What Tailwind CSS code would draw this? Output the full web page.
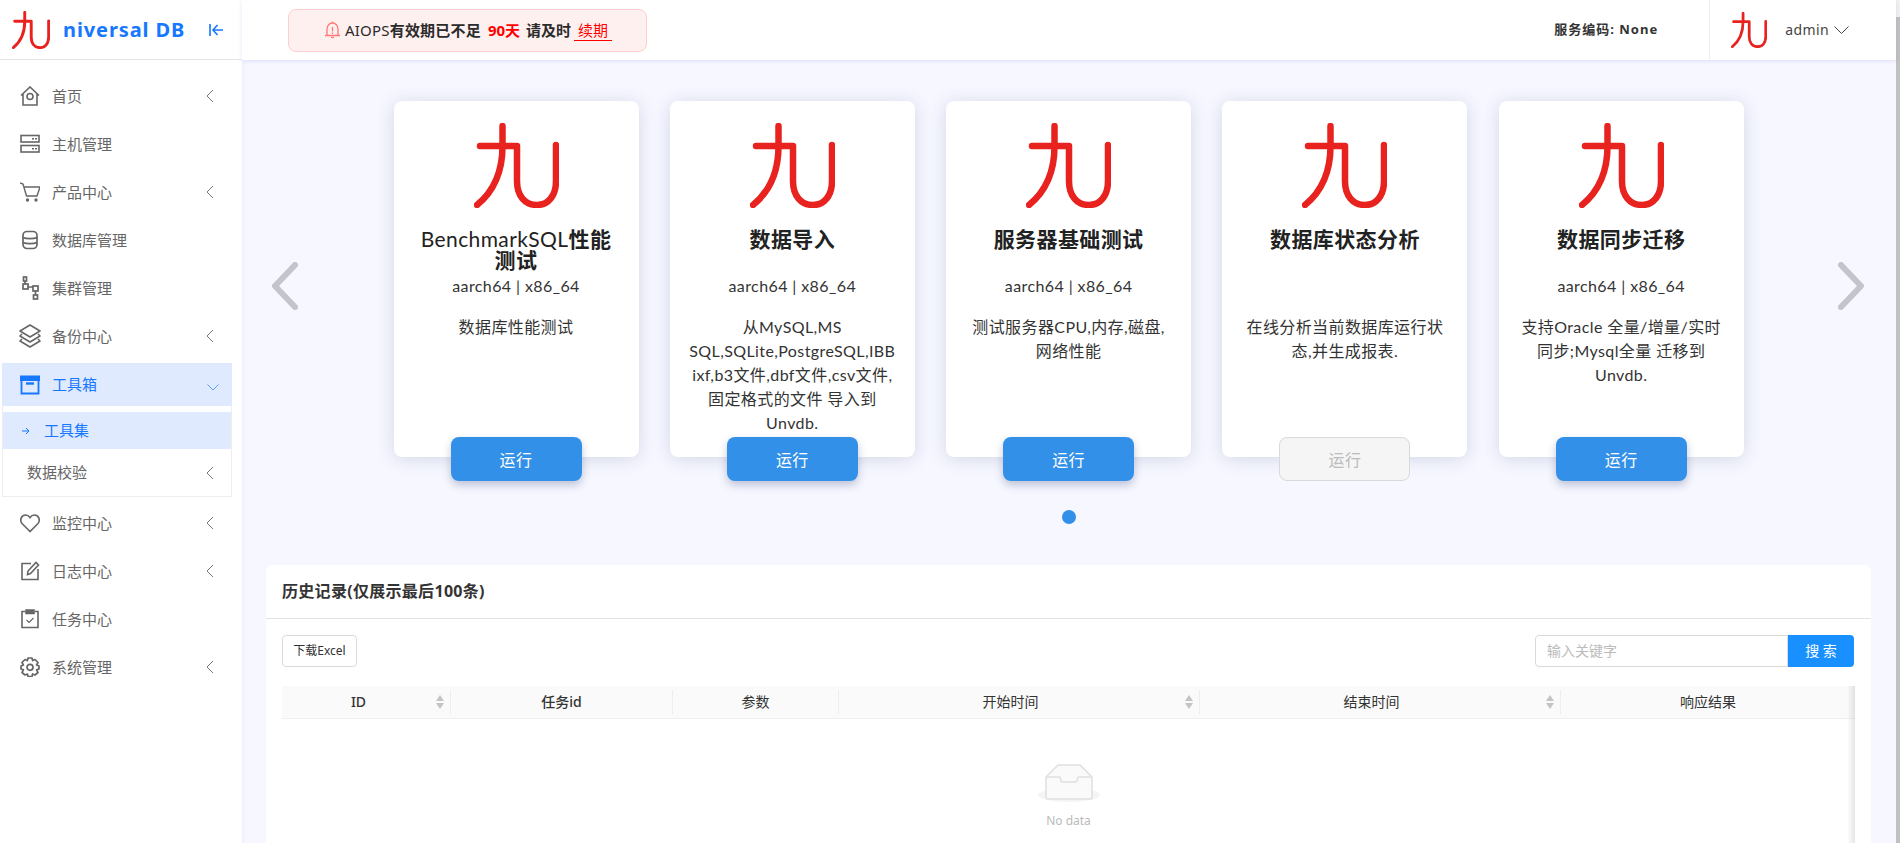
<!DOCTYPE html>
<html lang="zh">
<head>
<meta charset="UTF-8">
<title>Universal DB</title>
<script src="https://cdn.jsdelivr.net/npm/@tailwindcss/browser@4"></script>
</head>
<body class="h-screen overflow-hidden bg-white text-[#333] font-['Noto_Sans','Noto_Sans_CJK_SC',sans-serif]">
<svg class="hidden">
  <symbol id="logo" viewBox="0 0 85 85" fill="none">
    <path d="M28.5 3V23C28.5 50 19 69 3 82M6 23H43V58C43 73 51 82 63 82C74 82 82 73 82 58V22" stroke="#e8231f" stroke-width="6.5" stroke-linecap="round" stroke-linejoin="round"/>
  </symbol>
  <symbol id="chev-left" viewBox="0 0 8 14" fill="none">
    <path d="M7 1L1 7L7 13" stroke="#777" stroke-width="1"/>
  </symbol>
</svg>
<div class="flex h-screen">
  <!-- Sidebar -->
  <aside class="w-[242px] shrink-0 bg-white text-[15px] text-[#666] z-10 shadow-[1px_0_4px_rgba(90,90,200,0.06)]">
    <div class="h-[60px] flex items-center border-b border-[#e5e5e5] pl-3">
      <svg class="w-[38px] h-[38px]"><use href="#logo"/></svg>
      <span class="ml-[13px] text-[20px] font-bold tracking-[0.9px] text-[#1677ff]">niversal DB</span>
      <svg class="ml-auto mr-[19px] w-[14px] h-[14px]" viewBox="0 0 14 14" fill="none" stroke="#1677ff" stroke-width="1.6"><path d="M1 1V13M14 7H4M8.5 2L4 7L8.5 12"/></svg>
    </div>
    <nav class="pt-3">
      <a class="h-12 flex items-center pl-5 pr-7">
        <svg class="w-5 h-5" viewBox="0 0 20 20" fill="none" stroke="#666" stroke-width="1.6"><path d="M1 9.5L10 1L19 9.5M3 8V19H17V8"/><circle cx="10" cy="10.5" r="3"/></svg>
        <span class="ml-3">首页</span>
        <svg class="ml-auto w-2 h-[14px]"><use href="#chev-left"/></svg>
      </a>
      <a class="h-12 flex items-center pl-5 pr-7">
        <svg class="w-5 h-5" viewBox="0 0 20 20" fill="none" stroke="#666" stroke-width="1.6"><rect x="1" y="1.5" width="18" height="6.5"/><rect x="1" y="11.5" width="18" height="6.5"/><path d="M12 4.7H17M12 14.7H17" stroke-dasharray="2 1"/></svg>
        <span class="ml-3">主机管理</span>
      </a>
      <a class="h-12 flex items-center pl-5 pr-7">
        <svg class="w-5 h-5" viewBox="0 0 20 20" fill="none" stroke="#666" stroke-width="1.4"><path d="M0 1L3 2L6.5 14H17L20 5H4"/><circle cx="7.5" cy="18" r="1" fill="#666"/><circle cx="16" cy="18" r="1" fill="#666"/></svg>
        <span class="ml-3">产品中心</span>
        <svg class="ml-auto w-2 h-[14px]"><use href="#chev-left"/></svg>
      </a>
      <a class="h-12 flex items-center pl-5 pr-7">
        <svg class="w-5 h-5" viewBox="0 0 20 20" fill="none" stroke="#666" stroke-width="1.7"><rect x="3" y="1.5" width="14" height="17" rx="4"/><path d="M3 7.5C6 9 14 9 17 7.5M3 12.5C6 14 14 14 17 12.5"/></svg>
        <span class="ml-3">数据库管理</span>
      </a>
      <a class="h-12 flex items-center pl-5 pr-7">
        <svg class="w-5 h-6" viewBox="0 0 20 24" fill="none" stroke="#666" stroke-width="1.7"><rect x="3.5" y="1" width="3" height="4"/><rect x="3" y="8" width="5" height="5"/><rect x="13" y="10" width="5" height="5"/><rect x="13.5" y="19" width="4" height="4"/><path d="M5 5V8M8 11H13M15.5 15V19"/></svg>
        <span class="ml-3">集群管理</span>
      </a>
      <a class="h-12 flex items-center pl-5 pr-7">
        <svg class="w-[22px] h-[24px] -ml-px -mr-px" viewBox="0 0 22 24" fill="none" stroke="#666" stroke-width="1.6" stroke-linejoin="round"><path d="M11 1L21 7L11 13L1 7Z"/><path d="M3 10L1 12L11 18L21 12L19 10"/><path d="M3 15L1 17L11 23L21 17L19 15"/></svg>
        <span class="ml-3">备份中心</span>
        <svg class="ml-auto w-2 h-[14px]"><use href="#chev-left"/></svg>
      </a>
      <div class="mt-[3px] mb-[2px] mx-[2px] w-[230px]">
        <a class="h-[43px] flex items-center pl-[18px] pr-[13px] bg-[#dfeaff] text-[#1677ff]">
          <svg class="w-5 h-5" viewBox="0 0 20 20" fill="none" stroke="#1677ff" stroke-width="1.8"><path d="M0 1.5H20V5H0Z" fill="#1677ff"/><path d="M1.5 5V18.5H18.5V5"/><path d="M6 8.5H14" stroke-width="2.4"/></svg>
          <span class="ml-3">工具箱</span>
          <svg class="ml-auto w-3 h-[7px] mt-[6px]" viewBox="0 0 12 7" fill="none" stroke="#5b9cf8" stroke-width="1"><path d="M0.5 0.5L6 6L11.5 0.5"/></svg>
        </a>
        <div class="h-[91px] border border-t-0 border-[#eee] pt-[6px]">
          <a class="h-[37px] flex items-center pl-[19px] bg-[#dfeaff] text-[#1677ff]">
            <svg class="w-2 h-2" viewBox="0 0 8 8" fill="none" stroke="#1677ff" stroke-width="1"><path d="M0 4H7M4 1L7 4L4 7"/></svg>
            <span class="ml-[14px]">工具集</span>
          </a>
          <a class="h-[47px] flex items-center pl-[24px] pr-[17px]">
            <span>数据校验</span>
            <svg class="ml-auto w-2 h-[14px]"><use href="#chev-left"/></svg>
          </a>
        </div>
      </div>
      <a class="h-12 flex items-center pl-5 pr-7">
        <svg class="w-5 h-5" viewBox="0 0 20 20" fill="none" stroke="#666" stroke-width="1.6"><path d="M10 18.5L2 10.5C-0.5 7.5 1 2 5.5 2C7.5 2 9 3 10 4.5C11 3 12.5 2 14.5 2C19 2 20.5 7.5 18 10.5Z"/></svg>
        <span class="ml-3">监控中心</span>
        <svg class="ml-auto w-2 h-[14px]"><use href="#chev-left"/></svg>
      </a>
      <a class="h-12 flex items-center pl-5 pr-7">
        <svg class="w-5 h-5" viewBox="0 0 20 20" fill="none" stroke="#666" stroke-width="1.6"><path d="M11 2.5H2V18.5H18V8"/><path d="M7.5 13.5L8 10L16 1.5L18.5 4L10.5 12.5Z"/></svg>
        <span class="ml-3">日志中心</span>
        <svg class="ml-auto w-2 h-[14px]"><use href="#chev-left"/></svg>
      </a>
      <a class="h-12 flex items-center pl-5 pr-7">
        <svg class="w-5 h-5" viewBox="0 0 20 20" fill="none" stroke="#666" stroke-width="1.6"><path d="M5 2.5H2V18.5H18V2.5H15"/><path d="M6 1H14V4.5H6Z" fill="#666"/><path d="M6.5 11L9 13.5L13.5 9" stroke-width="1.2"/></svg>
        <span class="ml-3">任务中心</span>
      </a>
      <a class="h-12 flex items-center pl-5 pr-7">
        <svg class="w-5 h-5" viewBox="0 0 20 20" fill="none" stroke="#666" stroke-width="1.7" stroke-linejoin="round"><path d="M8 1H12L12.6 3.6L15 2.5L18 5.5L16.6 8L19 9V12L16.6 12.8L18 15.5L15 18L12.6 17L12 19.5H8L7.4 17L5 18L2 15.5L3.4 12.8L1 12V9L3.4 8L2 5.5L5 2.5L7.4 3.6Z"/><circle cx="10" cy="10.3" r="3"/></svg>
        <span class="ml-3">系统管理</span>
        <svg class="ml-auto w-2 h-[14px]"><use href="#chev-left"/></svg>
      </a>
    </nav>
  </aside>

  <!-- Main -->
  <main class="flex-1 min-w-0 flex flex-col bg-[#f6f7ff]">
    <header class="h-[60px] shrink-0 bg-white flex items-center pl-[46px] shadow-[0_1px_4px_rgba(100,100,230,0.18)] z-10">
      <div class="w-[359px] h-[43px] flex items-center pl-[35px] rounded-lg border border-[#ffcfcf] bg-[#fff0f0] text-[15px] font-semibold text-[#2b2b2b]">
        <svg class="w-[17px] h-[18px] mr-[4px]" viewBox="0 0 17 18" fill="none" stroke="#ff7875" stroke-width="1.3"><path d="M1 14.5H16M3 14.5V8C3 4.5 5.5 2 8.5 2C11.5 2 14 4.5 14 8V14.5"/><path d="M7 16.5H10"/><path d="M8.5 0.5V2M8.5 6V10.5M8.5 11.5V13"/></svg>
        <span class="tracking-[0.2px]"><span class="font-normal">AIOPS</span>有效期已不足</span>
        <span class="ml-[7px] font-bold text-[#f00]">90天</span>
        <span class="ml-[6px]">请及时</span>
        <span class="ml-[3px] px-[4px] h-[21px] border-b border-[#f00] text-[#f00] leading-[20px] font-normal">续期</span>
      </div>
      <span class="ml-auto text-[13px] font-bold tracking-[1px] text-[#333]">服务编码: None</span>
      <div class="ml-[51px] h-[60px] border-l border-[#eee] flex items-center pl-[21px] pr-[47px]">
        <svg class="w-9 h-9"><use href="#logo"/></svg>
        <span class="ml-[18px] text-sm tracking-[0.4px] text-[#444]">admin</span>
        <svg class="ml-[5px] w-[15px] h-2" viewBox="0 0 15 8" fill="none" stroke="#444" stroke-width="1"><path d="M0.5 0.5L7.5 7.5L14.5 0.5"/></svg>
      </div>
    </header>

    <!-- Carousel -->
    <section class="shrink-0 pt-[41px] flex flex-col items-center">
      <div class="w-full flex items-center pl-[30px]">
        <svg class="w-[26px] h-12 mt-[14px]" viewBox="0 0 26 48" fill="none" stroke="#c4c5cc" stroke-width="6" stroke-linecap="round" stroke-linejoin="round"><path d="M23 3L3 24L23 45"/></svg>
        <div class="ml-[95.5px] flex gap-[31.3px] font-['Lato','Noto_Sans_CJK_SC',sans-serif] text-base tracking-[0.4px]">
          <div class="relative w-[245px] h-[356px] rounded-lg bg-white pt-[22px] px-3 flex flex-col items-center text-center shadow-[0_2px_18px_rgba(60,70,120,0.18)]">
            <svg class="w-[85px] h-[85px] shrink-0"><use href="#logo"/></svg>
            <h3 class="mt-5 h-[46px] text-[21px] leading-[21px] font-bold text-[#222]"><span class="font-normal">BenchmarkSQL</span>性能<br>测试</h3>
            <p class="h-6 leading-6">aarch64 | x86_64</p>
            <p class="mt-[17px] leading-6">数据库性能测试</p>
            <button class="absolute left-[57px] top-[336px] w-[131px] h-11 pt-[2px] rounded-lg bg-[#3390e8] text-white shadow-[0_4px_8px_rgba(60,70,120,0.3)]">运行</button>
          </div>
          <div class="relative w-[245px] h-[356px] rounded-lg bg-white pt-[22px] px-3 flex flex-col items-center text-center shadow-[0_2px_18px_rgba(60,70,120,0.18)]">
            <svg class="w-[85px] h-[85px] shrink-0"><use href="#logo"/></svg>
            <h3 class="mt-5 h-[46px] text-[21px] leading-[21px] font-bold text-[#222]">数据导入</h3>
            <p class="h-6 leading-6">aarch64 | x86_64</p>
            <p class="mt-[17px] leading-6">从MySQL,MS<br>SQL,SQLite,PostgreSQL,IBB<br>ixf,b3文件,dbf文件,csv文件,<br>固定格式的文件 导入到<br>Unvdb.</p>
            <button class="absolute left-[57px] top-[336px] w-[131px] h-11 pt-[2px] rounded-lg bg-[#3390e8] text-white shadow-[0_4px_8px_rgba(60,70,120,0.3)]">运行</button>
          </div>
          <div class="relative w-[245px] h-[356px] rounded-lg bg-white pt-[22px] px-3 flex flex-col items-center text-center shadow-[0_2px_18px_rgba(60,70,120,0.18)]">
            <svg class="w-[85px] h-[85px] shrink-0"><use href="#logo"/></svg>
            <h3 class="mt-5 h-[46px] text-[21px] leading-[21px] font-bold text-[#222]">服务器基础测试</h3>
            <p class="h-6 leading-6">aarch64 | x86_64</p>
            <p class="mt-[17px] leading-6">测试服务器CPU,内存,磁盘,<br>网络性能</p>
            <button class="absolute left-[57px] top-[336px] w-[131px] h-11 pt-[2px] rounded-lg bg-[#3390e8] text-white shadow-[0_4px_8px_rgba(60,70,120,0.3)]">运行</button>
          </div>
          <div class="relative w-[245px] h-[356px] rounded-lg bg-white pt-[22px] px-3 flex flex-col items-center text-center shadow-[0_2px_18px_rgba(60,70,120,0.18)]">
            <svg class="w-[85px] h-[85px] shrink-0"><use href="#logo"/></svg>
            <h3 class="mt-5 h-[46px] text-[21px] leading-[21px] font-bold text-[#222]">数据库状态分析</h3>
            <p class="h-6"></p>
            <p class="mt-[17px] leading-6">在线分析当前数据库运行状<br>态,并生成报表.</p>
            <button class="absolute left-[57px] top-[336px] w-[131px] h-11 pt-[2px] rounded-lg border border-[#d9d9d9] bg-[#f5f5f5] text-[#bbb]">运行</button>
          </div>
          <div class="relative w-[245px] h-[356px] rounded-lg bg-white pt-[22px] px-3 flex flex-col items-center text-center shadow-[0_2px_18px_rgba(60,70,120,0.18)]">
            <svg class="w-[85px] h-[85px] shrink-0"><use href="#logo"/></svg>
            <h3 class="mt-5 h-[46px] text-[21px] leading-[21px] font-bold text-[#222]">数据同步迁移</h3>
            <p class="h-6 leading-6">aarch64 | x86_64</p>
            <p class="mt-[17px] leading-6">支持Oracle 全量/增量/实时<br>同步;Mysql全量 迁移到<br>Unvdb.</p>
            <button class="absolute left-[57px] top-[336px] w-[131px] h-11 pt-[2px] rounded-lg bg-[#3390e8] text-white shadow-[0_4px_8px_rgba(60,70,120,0.3)]">运行</button>
          </div>
        </div>
        <svg class="ml-[94px] w-[26px] h-12 mt-[14px]" viewBox="0 0 26 48" fill="none" stroke="#c4c5cc" stroke-width="6" stroke-linecap="round" stroke-linejoin="round"><path d="M3 3L23 24L3 45"/></svg>
      </div>
      <span class="mt-[53px] w-[14px] h-[14px] rounded-full bg-[#3390e8]"></span>
    </section>

    <!-- History -->
    <section class="relative flex-1 min-h-0 mt-[41px] ml-6 mr-[25px] rounded-t-md bg-white overflow-hidden">
      <div class="h-[54px] pb-[2px] flex items-center border-b border-[#e3e3e3] px-4 text-base font-bold tracking-[0.3px] text-[#333]">历史记录(仅展示最后100条)</div>
      <div class="pl-4 pr-[17px] pt-4">
        <div class="flex justify-between">
          <button class="w-[75px] h-8 rounded border border-[#d9d9d9] text-xs text-[#333]">下载Excel</button>
          <div class="flex h-8">
            <div class="w-[253px] border border-[#d9d9d9] rounded-l pl-[11px] text-sm leading-[30px] text-[#bbb]">输入关键字</div>
            <button class="w-[66px] rounded-r bg-[#1890ff] text-white text-sm">搜 索</button>
          </div>
        </div>
        <div class="relative mt-[19px] w-[1573px] text-sm text-[#333]">
          <div class="h-[33px] flex bg-[#fafafa] border-b border-[#f0f0f0]">
            <div class="w-[168px] flex items-center justify-center pr-[15px] relative font-medium">ID
              <span class="absolute right-[6px] flex flex-col gap-[2px]"><i class="w-0 h-0 border-x-4 border-x-transparent border-b-[6px] border-b-[#c4c4c4]"></i><i class="w-0 h-0 border-x-4 border-x-transparent border-t-[6px] border-t-[#c4c4c4]"></i></span>
            </div>
            <div class="w-[222px] flex items-center justify-center border-l border-[#eee] my-[4px] font-medium">任务id</div>
            <div class="w-[166px] flex items-center justify-center border-l border-[#eee] my-[4px]">参数</div>
            <div class="w-[361px] flex items-center justify-center pr-[17px] relative border-l border-[#eee] my-[4px]">开始时间
              <span class="absolute right-[6px] flex flex-col gap-[2px]"><i class="w-0 h-0 border-x-4 border-x-transparent border-b-[6px] border-b-[#c4c4c4]"></i><i class="w-0 h-0 border-x-4 border-x-transparent border-t-[6px] border-t-[#c4c4c4]"></i></span>
            </div>
            <div class="w-[361px] flex items-center justify-center pr-[17px] relative border-l border-[#eee] my-[4px]">结束时间
              <span class="absolute right-[6px] flex flex-col gap-[2px]"><i class="w-0 h-0 border-x-4 border-x-transparent border-b-[6px] border-b-[#c4c4c4]"></i><i class="w-0 h-0 border-x-4 border-x-transparent border-t-[6px] border-t-[#c4c4c4]"></i></span>
            </div>
            <div class="flex-1 flex items-center justify-center border-l border-[#eee] my-[4px]">响应结果</div>
          </div>
          <div class="absolute right-0 top-0 h-[300px] w-2 bg-gradient-to-l from-black/10 to-transparent"></div>
          <div class="pt-[44px] flex flex-col items-center">
            <svg class="w-[64px] h-[41px]" viewBox="0 0 64 41" fill="none">
              <ellipse cx="32" cy="32" rx="31" ry="7" fill="#f5f5f5"/>
              <path d="M9 14L21 2H43L55 14V34C55 35 54 36 53 36H11C10 36 9 35 9 34Z" fill="#fafafa" stroke="#e0e0e0" stroke-width="1.5"/>
              <path d="M9 14H22C23 14 23.5 15 23.5 16C23.5 18 25 19 26 19H38C39 19 40.5 18 40.5 16C40.5 15 41 14 42 14H55" stroke="#e0e0e0" stroke-width="1.5"/>
            </svg>
            <span class="mt-[9px] text-xs text-[#bbb]">No data</span>
          </div>
        </div>
      </div>
    </section>
  </main>

  <!-- Scrollbar -->
  <div class="w-1 shrink-0 bg-[#f1f1f1] pt-[17px]"><div class="h-full bg-[#c1c1c1]"></div></div>
</div>
</body>
</html>
